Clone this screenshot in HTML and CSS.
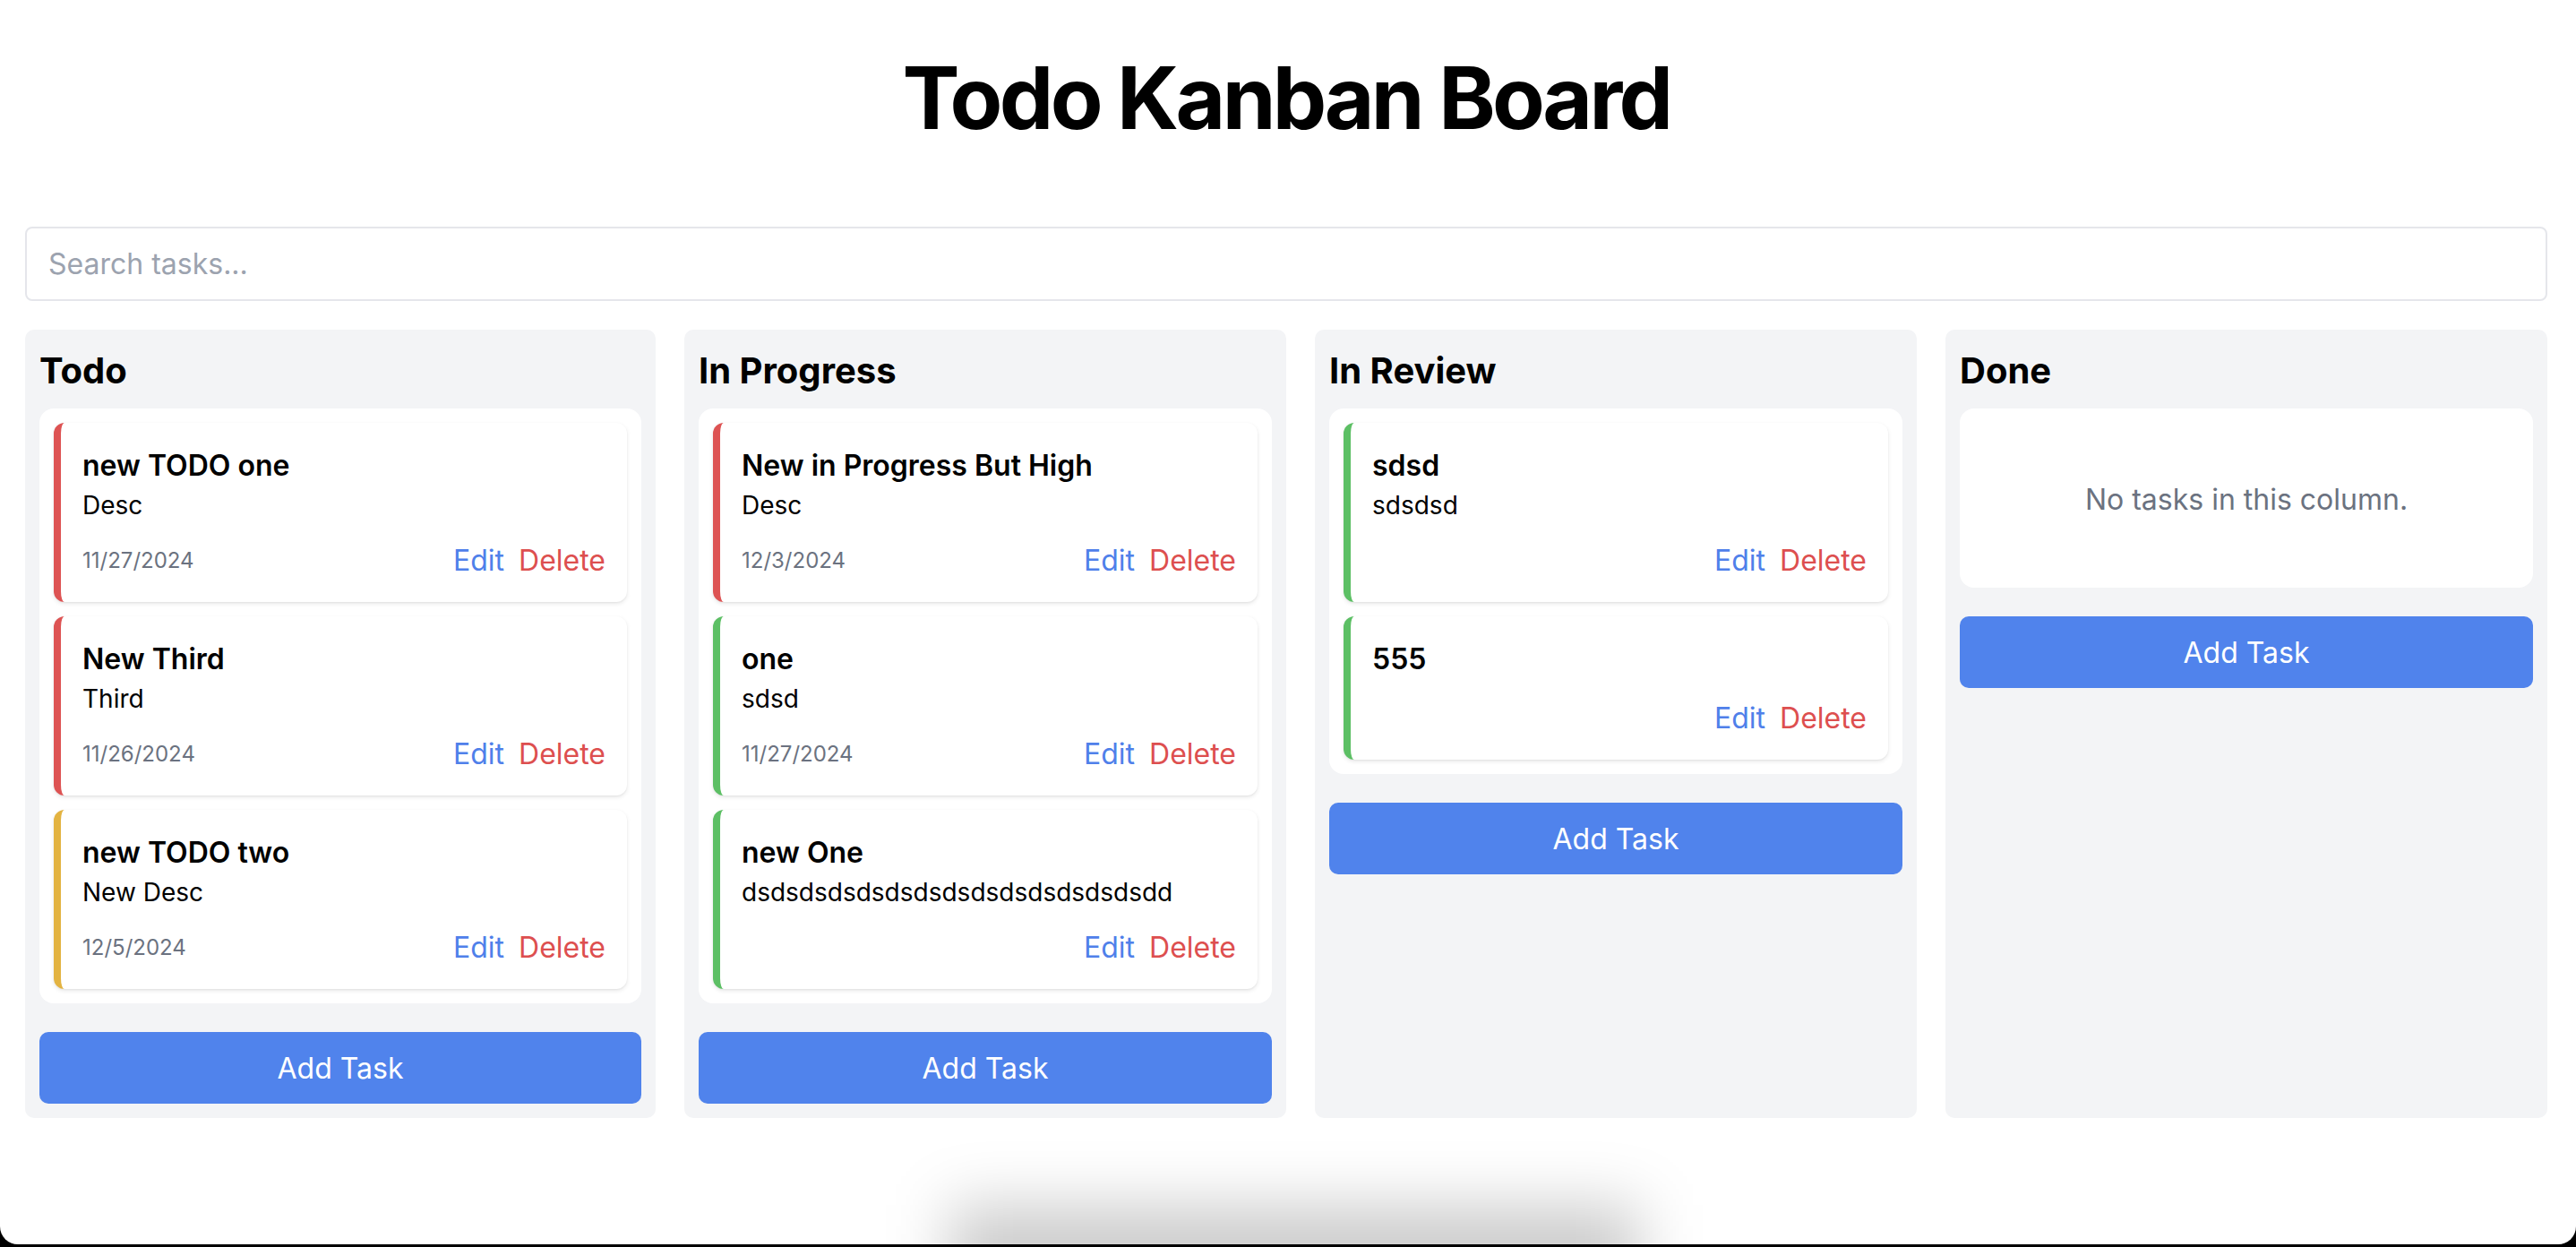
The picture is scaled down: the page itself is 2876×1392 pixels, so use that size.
FILE: index.html
```html
<!DOCTYPE html>
<html lang="en">
<head>
<meta charset="utf-8">
<title>Todo Kanban Board</title>
<link rel="stylesheet" href="styles.css">
</head>
<body>
<div class="page">
  <main class="board-wrap">
    <h1 class="title">Todo Kanban Board</h1>
    <div class="search">Search tasks...</div>
    <div class="board">
      <section class="column">
        <h2 class="col-title">Todo</h2>
        <div class="list">
          <div class="card high">
            <div class="card-title">new TODO one</div>
            <div class="card-desc">Desc</div>
            <div class="card-foot"><span class="date">11/27/2024</span><span class="actions"><span class="edit">Edit</span><span class="delete">Delete</span></span></div>
          </div>
          <div class="card high">
            <div class="card-title">New Third</div>
            <div class="card-desc">Third</div>
            <div class="card-foot"><span class="date">11/26/2024</span><span class="actions"><span class="edit">Edit</span><span class="delete">Delete</span></span></div>
          </div>
          <div class="card medium">
            <div class="card-title">new TODO two</div>
            <div class="card-desc">New Desc</div>
            <div class="card-foot"><span class="date">12/5/2024</span><span class="actions"><span class="edit">Edit</span><span class="delete">Delete</span></span></div>
          </div>
        </div>
        <div class="add">Add Task</div>
      </section>
      <section class="column">
        <h2 class="col-title">In Progress</h2>
        <div class="list">
          <div class="card high">
            <div class="card-title">New in Progress But High</div>
            <div class="card-desc">Desc</div>
            <div class="card-foot"><span class="date">12/3/2024</span><span class="actions"><span class="edit">Edit</span><span class="delete">Delete</span></span></div>
          </div>
          <div class="card low">
            <div class="card-title">one</div>
            <div class="card-desc">sdsd</div>
            <div class="card-foot"><span class="date">11/27/2024</span><span class="actions"><span class="edit">Edit</span><span class="delete">Delete</span></span></div>
          </div>
          <div class="card low">
            <div class="card-title">new One</div>
            <div class="card-desc">dsdsdsdsdsdsdsdsdsdsdsdsdsdsdd</div>
            <div class="card-foot"><span class="date"></span><span class="actions"><span class="edit">Edit</span><span class="delete">Delete</span></span></div>
          </div>
        </div>
        <div class="add">Add Task</div>
      </section>
      <section class="column">
        <h2 class="col-title">In Review</h2>
        <div class="list">
          <div class="card low">
            <div class="card-title">sdsd</div>
            <div class="card-desc">sdsdsd</div>
            <div class="card-foot"><span class="date"></span><span class="actions"><span class="edit">Edit</span><span class="delete">Delete</span></span></div>
          </div>
          <div class="card low">
            <div class="card-title">555</div>
            <div class="card-foot"><span class="date"></span><span class="actions"><span class="edit">Edit</span><span class="delete">Delete</span></span></div>
          </div>
        </div>
        <div class="add">Add Task</div>
      </section>
      <section class="column">
        <h2 class="col-title">Done</h2>
        <div class="list empty">No tasks in this column.</div>
        <div class="add">Add Task</div>
      </section>
    </div>
  </main>
  <div class="dock-shadow"></div>
</div>
</body>
</html>
```

FILE: styles.css
```css
html {
  background: #000;
}
body {
  margin: 0;
  font-family: Inter, "Noto Sans", "Liberation Sans", sans-serif;
  color: #000;
}
.page {
  position: relative;
  height: 1389px;
  background: #fff;
  border-radius: 0 0 20px 20px;
  overflow: hidden;
}
.board-wrap {
  padding: 61px 32px 0 28px;
}
.title {
  margin: 0 0 96px;
  font-size: 96px;
  line-height: 96px;
  font-weight: 700;
  text-align: center;
  letter-spacing: -3.6px;
}
.search {
  box-sizing: border-box;
  height: 83px;
  border: 2px solid #e5e6eb;
  border-radius: 8px;
  padding: 0 24px;
  font-size: 32px;
  line-height: 80px;
  color: #9ca3af;
  margin-bottom: 32px;
}
.board {
  display: grid;
  grid-template-columns: 22fr 21fr 21fr 21fr;
  column-gap: 32px;
  align-items: stretch;
}
.column {
  background: #f3f4f6;
  border-radius: 10px;
  padding: 16px;
  height: 880px;
  box-sizing: border-box;
}
.col-title {
  margin: 0 0 16px;
  padding-top: 2px;
  height: 54px;
  font-size: 40px;
  line-height: 56px;
  font-weight: 700;
}
.list {
  background: #fff;
  border-radius: 16px;
  padding: 16px;
  display: flex;
  flex-direction: column;
  gap: 16px;
}
.list.empty {
  height: 200px;
  box-sizing: border-box;
  justify-content: center;
  align-items: center;
  padding-top: 20px;
  font-size: 32px;
  line-height: 48px;
  color: #6b7280;
}
.card {
  background: #fff;
  border-radius: 12px;
  border-left: 8px solid #dd5353;
  padding: 24px;
  box-shadow: 0 2px 5px rgba(0, 0, 0, 0.09), 0 1px 2px rgba(0, 0, 0, 0.05);
}
.card.high {
  border-left-color: #dd5353;
}
.card.medium {
  border-left-color: #e3b341;
}
.card.low {
  border-left-color: #5cbf64;
}
.card-title {
  font-size: 32px;
  line-height: 48px;
  font-weight: 600;
}
.card-desc {
  font-size: 28px;
  line-height: 40px;
}
.card-foot {
  margin-top: 16px;
  display: flex;
  justify-content: space-between;
  align-items: center;
  box-sizing: border-box;
  height: 48px;
  padding-top: 3px;
}
.date {
  font-size: 24px;
  line-height: 32px;
  color: #6b7280;
}
.actions {
  display: flex;
  gap: 16px;
  font-size: 32px;
  line-height: 45px;
}
.edit {
  color: #4f80ea;
}
.delete {
  color: #dd4f4f;
}
.add {
  margin-top: 32px;
  height: 80px;
  border-radius: 10px;
  background: #5083ec;
  color: #fff;
  font-size: 32px;
  line-height: 82px;
  text-align: center;
}
.dock-shadow {
  position: absolute;
  left: 1060px;
  top: 1345px;
  width: 770px;
  height: 110px;
  background: rgba(0, 0, 0, 0.2);
  filter: blur(34px);
}
```
